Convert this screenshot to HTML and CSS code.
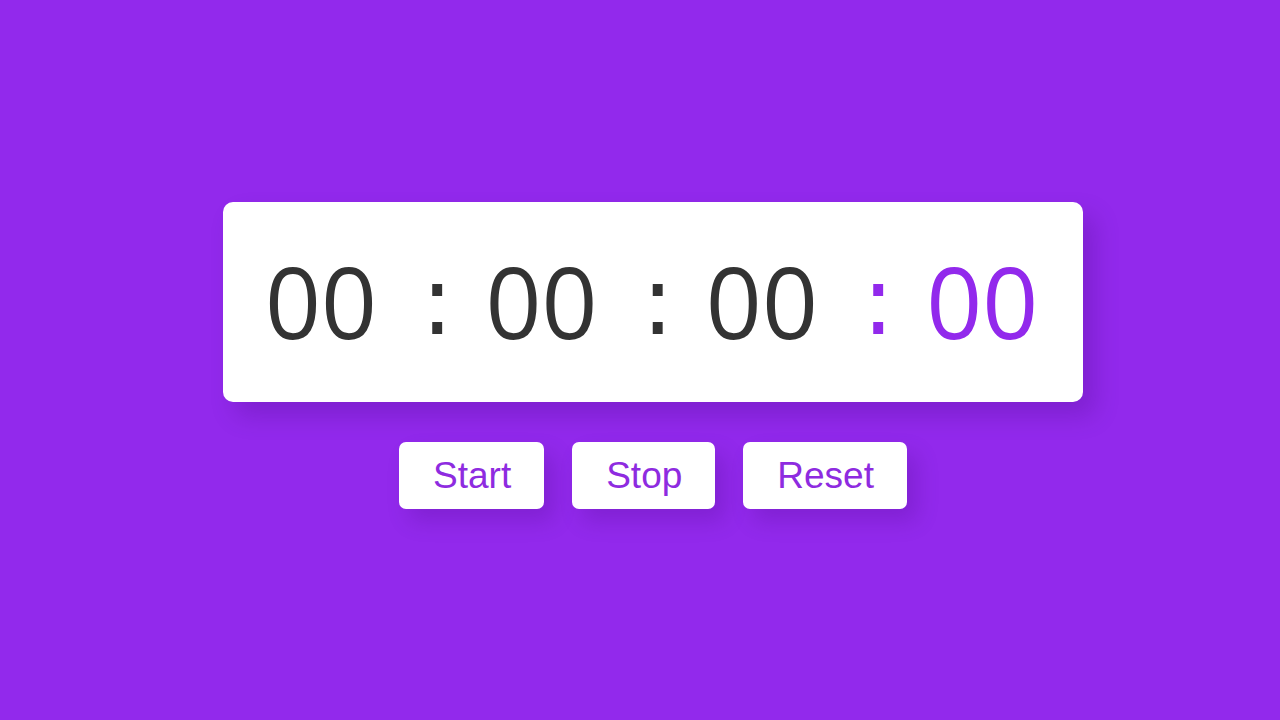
FILE: index.html
```html
<!DOCTYPE html>
<html lang="en">
<head>
<meta charset="utf-8">
<title>Stopwatch</title>
<link rel="stylesheet" href="styles.css">
</head>
<body>
<main class="stopwatch">
  <div class="display">
    <span class="unit">00</span>
    <span class="sep">:</span>
    <span class="unit">00</span>
    <span class="sep">:</span>
    <span class="unit">00</span>
    <span class="sep accent">:</span>
    <span class="unit accent">00</span>
  </div>
  <div class="controls">
    <button class="btn">Start</button>
    <button class="btn">Stop</button>
    <button class="btn">Reset</button>
  </div>
</main>
</body>
</html>
```
FILE: styles.css
```css
* { box-sizing: border-box; }
html, body { margin: 0; height: 100%; }
body {
  background: #9229ec;
  font-family: "Open Sans", "Noto Sans", sans-serif;
}
.stopwatch {
  height: 100%;
  display: flex;
  flex-direction: column;
  align-items: center;
  justify-content: center;
  gap: 40px;
  padding: 0 0 9px 26px;
}
.display {
  width: 860px;
  height: 200px;
  background: #fff;
  border-radius: 10px;
  box-shadow: 12px 14px 24px rgba(60, 0, 110, 0.22);
  display: flex;
  align-items: center;
  padding: 0 0 3px 42px;
  font-size: 98px;
  line-height: 1;
  color: #333;
}
.sep {
  font-family: "DejaVu Sans", sans-serif;
  font-size: 96px;
  margin: 0 32px 0 44px;
}
.accent { color: #9229ec; }
.controls {
  display: flex;
  gap: 28px;
}
.btn {
  font-family: "Liberation Sans", Arial, sans-serif;
  font-size: 37px;
  line-height: 43px;
  padding: 12px 33px 12px 34px;
  border: none;
  border-radius: 7px;
  background: #fff;
  color: #8e2be0;
  box-shadow: 10px 12px 22px rgba(60, 0, 110, 0.2);
  cursor: pointer;
}
```
